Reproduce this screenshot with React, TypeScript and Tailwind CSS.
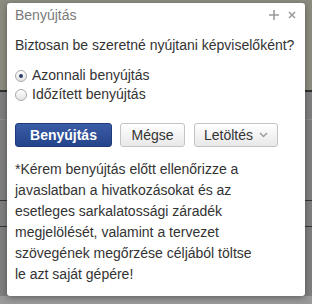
import React from "react";

function Radio({ checked }: { checked?: boolean }) {
  return (
    <span className="flex h-[12px] w-[12px] shrink-0 items-center justify-center rounded-full border border-[#a9a9a9] bg-gradient-to-b from-[#ffffff] to-[#e3e3e3]">
      {checked && <span className="h-[4px] w-[4px] rounded-full bg-[#2f3f6e]" />}
    </span>
  );
}

function Btn({
  children,
  primary,
  className = "",
}: {
  children: React.ReactNode;
  primary?: boolean;
  className?: string;
}) {
  return (
    <button
      className={
        primary
          ? `flex h-[24px] items-center justify-center rounded-[3px] border border-[#1e3a78] bg-gradient-to-b from-[#3b5ca6] to-[#24448b] text-[14px] font-bold text-white ${className}`
          : `flex h-[24px] items-center justify-center rounded-[3px] border border-[#c4c4c4] bg-gradient-to-b from-[#ffffff] to-[#e8e8e8] text-[14px] text-[#333] ${className}`
      }
    >
      {children}
    </button>
  );
}

export default function App() {
  return (
    <div
      className="relative h-[304px] w-[312px] overflow-hidden bg-[#7e7e7e]"
      style={{ fontFamily: '"Liberation Sans", Arial, sans-serif' }}
    >
      {/* page behind the modal */}
      <div className="flex flex-col">
        <div className="h-[90px] bg-[#8b8b7e]" />
        <div className="h-[2px] bg-[#2f2f2f]" />
        <div className="h-[27px]" />
        <div className="h-[1px] bg-[#8c8c8c]" />
        <div className="h-[80px]" />
        <div className="h-[1px] bg-[#333]" />
        <div className="h-[25px]" />
        <div className="h-[1px] bg-[#333]" />
        <div className="h-[69px]" />
        <div className="h-[8px] bg-[#9a9a9a]" />
      </div>

      {/* modal */}
      <div className="absolute left-[7px] top-[3px] h-[293px] w-[298px] rounded-[3px] bg-white px-[8px] shadow-[0_2px_6px_rgba(0,0,0,0.35)]">
        <div className="flex h-[24px] items-center justify-between">
          <span className="text-[14px] text-[#7a7a7a]">Benyújtás</span>
          <div className="flex items-center gap-[9px] pr-[1px] text-[#999]">
            <svg width="10" height="10" viewBox="0 0 10 10">
              <path d="M5 0v10M0 5h10" stroke="#9a9a9a" strokeWidth="1.6" />
            </svg>
            <svg width="8" height="8" viewBox="0 0 8 8">
              <path d="M1 1l6 6M7 1l-6 6" stroke="#9a9a9a" strokeWidth="1.5" />
            </svg>
          </div>
        </div>

        <p className="mt-[8px] text-[14px] leading-[20px] text-[#333]">
          Biztosan be szeretné nyújtani képviselőként?
        </p>

        <div className="mt-[11px] flex flex-col text-[14px] text-[#333]">
          <label className="flex h-[19px] items-center gap-[5px]">
            <Radio checked />
            Azonnali benyújtás
          </label>
          <label className="flex h-[19px] items-center gap-[5px]">
            <Radio />
            Időzített benyújtás
          </label>
        </div>

        <div className="mt-[19px] flex items-center">
          <Btn primary className="w-[97px]">
            Benyújtás
          </Btn>
          <Btn className="ml-[8px] w-[65px]">Mégse</Btn>
          <Btn className="ml-[9px] w-[84px] gap-[6px]">
            Letöltés
            <svg width="9" height="6" viewBox="0 0 9 6">
              <path d="M1 1l3.5 3.5L8 1" fill="none" stroke="#999" strokeWidth="1.4" />
            </svg>
          </Btn>
        </div>

        <p className="mt-[12px] w-[250px] text-[14px] leading-[21px] text-[#333]">
          *Kérem benyújtás előtt ellenőrizze a javaslatban a hivatkozásokat és az
          esetleges sarkalatossági záradék megjelölését, valamint a tervezet
          szövegének megőrzése céljából töltse le azt saját gépére!
        </p>
      </div>
    </div>
  );
}
